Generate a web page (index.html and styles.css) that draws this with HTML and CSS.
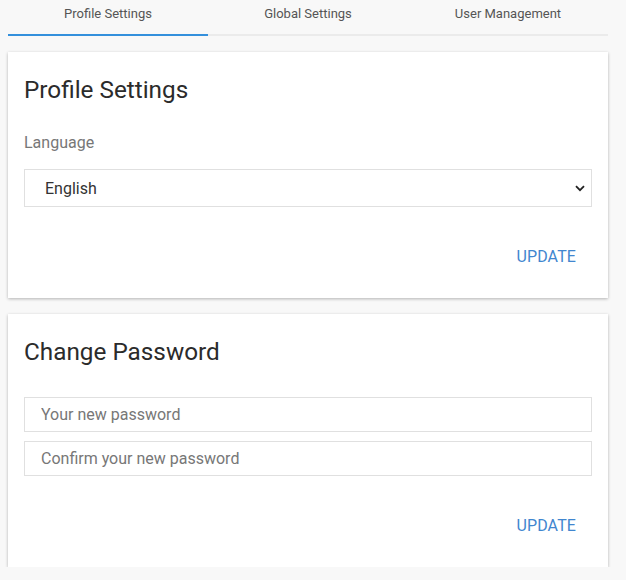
FILE: index.html
```html
<!DOCTYPE html>
<html lang="en">
<head>
<meta charset="utf-8">
<title>Settings</title>
<link rel="stylesheet" href="styles.css">
</head>
<body>
<div class="page">
  <nav class="tabs">
    <div class="tab active">Profile Settings</div>
    <div class="tab">Global Settings</div>
    <div class="tab">User Management</div>
  </nav>

  <section class="card">
    <h2 class="card-title">Profile Settings</h2>
    <label class="field-label">Language</label>
    <div class="select-wrap">
      <select class="select">
        <option>English</option>
      </select>
      <svg class="chevron" width="10" height="7" viewBox="0 0 10 7"><path d="M1 1.2 L5 5.2 L9 1.2" fill="none" stroke="#222" stroke-width="1.8"/></svg>
    </div>
    <div class="actions"><button class="btn">UPDATE</button></div>
  </section>

  <section class="card">
    <h2 class="card-title">Change Password</h2>
    <div class="inputs">
      <input class="input" type="password" placeholder="Your new password">
      <input class="input" type="password" placeholder="Confirm your new password">
    </div>
    <div class="actions"><button class="btn">UPDATE</button></div>
  </section>
</div>
</body>
</html>
```
FILE: styles.css
```css
* { box-sizing: border-box; }
html, body { margin: 0; padding: 0; background: #f8f8f8; }
body { font-family: Roboto, "Liberation Sans", sans-serif; color: #333; }
.page { padding: 0 18px 0 8px; }
.tabs { display: flex; width: 600px; border-bottom: 2px solid #ebebeb; }
.tab {
  flex: 1; display: flex; justify-content: center; padding-top: 6px;
  font-size: 13px; line-height: 16px; color: #555; margin-bottom: -2px;
  border-bottom: 2px solid transparent; height: 36px;
}
.tab.active { border-bottom-color: #3490dc; }
.card {
  width: 600px; background: #fff; margin-top: 16px;
  padding: 16px 16px 24px;
  box-shadow: 0 1px 3px rgba(0,0,0,0.28);
  display: flex; flex-direction: column;
}
.card-title { margin: 0; font-size: 24.3px; font-weight: 400; line-height: 44px; color: #2b2b2b; }
.field-label { margin-top: 21px; font-size: 16px; line-height: 20px; color: #777; }
.select-wrap { position: relative; margin-top: 16px; }
.select {
  appearance: none; -webkit-appearance: none; width: 100%; height: 38px;
  border: 1px solid #e0e0e0; background: #fff; border-radius: 0;
  padding: 0 20px; font-family: inherit; font-size: 16px; color: #333;
}
.chevron { position: absolute; right: 7px; top: 16px; }
.inputs { display: flex; flex-direction: column; gap: 9px; margin-top: 23px; }
.input {
  height: 35px; border: 1px solid #e0e0e0; padding: 0 16px; font-family: inherit;
  font-size: 16px; color: #333; border-radius: 0;
}
.input::placeholder { color: #777; }
.actions { display: flex; justify-content: flex-end; margin-top: 31px; }
.btn {
  height: 36px; padding: 0 16px; border: 0; background: none; font-family: inherit;
  font-size: 16px; color: #4186cf; letter-spacing: 0.1px;
}
```
